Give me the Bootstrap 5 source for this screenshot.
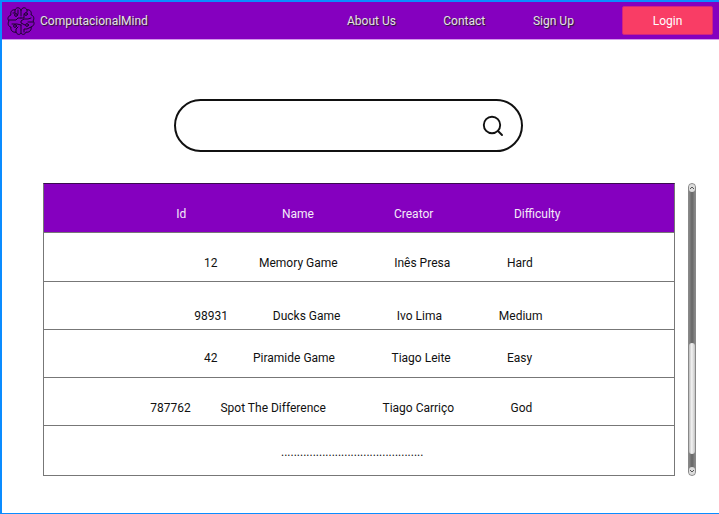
<!DOCTYPE html>
<html lang="en">
<head>
<meta charset="utf-8">
<meta name="viewport" content="width=device-width, initial-scale=1">
<title>ComputacionalMind</title>
<link rel="stylesheet" href="https://cdn.jsdelivr.net/npm/bootstrap@5.3.0/dist/css/bootstrap.min.css">
<style>
body{font-family:Roboto,sans-serif;font-size:12px;line-height:14px;color:#111;background:#fff;overflow:hidden}
.screen{height:514px;border:solid #0a8cff;border-width:2px 0 1px 2px}
.topbar{height:38px;background:#8500bf;border-bottom:1px solid #d49bea}
.topbar a{color:#e4e4e4;text-shadow:1px 1px 1px #222;text-decoration:none}
.logo{width:28px;height:30px;margin-left:5px}
.brand-name{margin-left:5px;width:307px}
.link-about{width:96.3px}.link-contact{width:89.7px}.link-sign{width:89px}
.topbar .login{width:91px;height:29px;background:#f93d65;border:1px solid #cf2482;border-radius:2px;color:#fff;text-shadow:none;font-size:12px}
.search{width:349px;height:53px;margin:59px 0 0 172px;border:2px solid #111;border-radius:27px;padding-right:17px}
.search input{min-width:0;outline:0}
.listing{margin:31px 0 0 41px}
.games{width:632px;border:1px solid #777;border-top-color:#3a0a50}
.game{display:grid;grid-template-columns:var(--a) var(--b) var(--c) 1fr;border-bottom:1px solid #777;white-space:nowrap}
.game:last-child{border-bottom:0}
.r-head{--a:105.8px;--b:112px;--c:120px;height:49px;padding:23px 0 0 132.2px;background:#8500bf;background-clip:padding-box;color:#f4eaf8}
.r-1{--a:55px;--b:135.2px;--c:112.8px;height:49px;padding:23px 0 0 160px}
.r-2{--a:78.5px;--b:124px;--c:102px;height:48px;padding:27px 0 0 150.3px}
.r-3{--a:49px;--b:138.5px;--c:115.5px;height:48px;padding:21px 0 0 160px}
.r-4{--a:70.3px;--b:162px;--c:128px;height:48px;padding:23px 0 0 106.2px}
.r-5{height:49px;padding:19px 0 0 237px}
.scroller{width:8px;margin-left:13px;border:1px solid #888;border-radius:4px;background:linear-gradient(90deg,#888,#666 50%,#888)}
.scroller .cap{height:8px;background:#ddd;border-radius:3px}
.scroller .thumb{height:111px;margin-top:151px;border-radius:3px;background:linear-gradient(90deg,#bbb,#f3f3f3 45%,#c4c4c4)}
</style>
<script src="https://cdn.jsdelivr.net/npm/bootstrap@5.3.0/dist/js/bootstrap.bundle.min.js"></script>
</head>
<body>
<div class="screen">
<nav class="topbar d-flex align-items-center">
<svg class="logo flex-shrink-0" viewBox="0 0 28 30" fill="none" stroke="#160425" stroke-width="0.95" stroke-linecap="round" stroke-linejoin="round">
<path d="M14 4C13 1 9 1 8 4C5 3 3 6 4 9C1 10 0 13 2 15C0 18 2 21 4 21C3 24 6 27 9 26C10 29 13 29 14 27C15 29 18 29 19 26C22 27 25 24 24 21C27 20 28 17 26 15C28 12 26 9 24 9C25 6 23 3 20 4C19 1 15 1 14 4M14 4V10M14 19V27M8 4V7H6M11 8V4M2 14H9L11 12H14M5 18H10L14 19M9 26V23L11 21M20 4V6M17 8V12H14M24 12L21 13H17L14 15V17L18 19M26 16H21M24 21L20 23H17V26"/>
<circle cx="9" cy="9" r="1.4"/><circle cx="19" cy="8" r="1.4"/><circle cx="8" cy="20" r="1.4"/><circle cx="20" cy="19" r="1.4"/></svg>
<a class="brand-name" href="#">ComputacionalMind</a>
<a class="link-about" href="#">About Us</a>
<a class="link-contact" href="#">Contact</a>
<a class="link-sign" href="#">Sign Up</a>
<a class="login d-flex align-items-center justify-content-center" href="#">Login</a>
</nav>
<main>
<form class="search d-flex align-items-center">
<input class="flex-grow-1 border-0 bg-transparent ms-4" type="text" aria-label="Search">
<svg width="22" height="22" viewBox="0 0 22 22" fill="none" stroke="#111" stroke-width="1.9" stroke-linecap="round"><circle cx="10" cy="10" r="8.2"/><path d="M16 16L20 20"/></svg>
</form>
<div class="listing d-flex">
<div class="games">
<div class="game r-head"><span>Id</span><span>Name</span><span>Creator</span><span>Difficulty</span></div>
<div class="game r-1"><span>12</span><span>Memory Game</span><span>Inês Presa</span><span>Hard</span></div>
<div class="game r-2"><span>98931</span><span>Ducks Game</span><span>Ivo Lima</span><span>Medium</span></div>
<div class="game r-3"><span>42</span><span>Piramide Game</span><span>Tiago Leite</span><span>Easy</span></div>
<div class="game r-4"><span>787762</span><span>Spot The Difference</span><span>Tiago Carriço</span><span>God</span></div>
<div class="game r-5 d-block">.............................................</div>
</div>
<div class="scroller d-flex flex-column">
<div class="cap d-flex justify-content-center align-items-center"><svg width="6" height="6" viewBox="0 0 6 6" fill="none" stroke="#555"><path d="M1 4L3 2L5 4"/></svg></div>
<div class="thumb"></div>
<div class="cap d-flex justify-content-center align-items-center mt-auto"><svg width="6" height="6" viewBox="0 0 6 6" fill="none" stroke="#555"><path d="M1 2L3 4L5 2"/></svg></div>
</div>
</div>
</main>
</div>
</body>
</html>
